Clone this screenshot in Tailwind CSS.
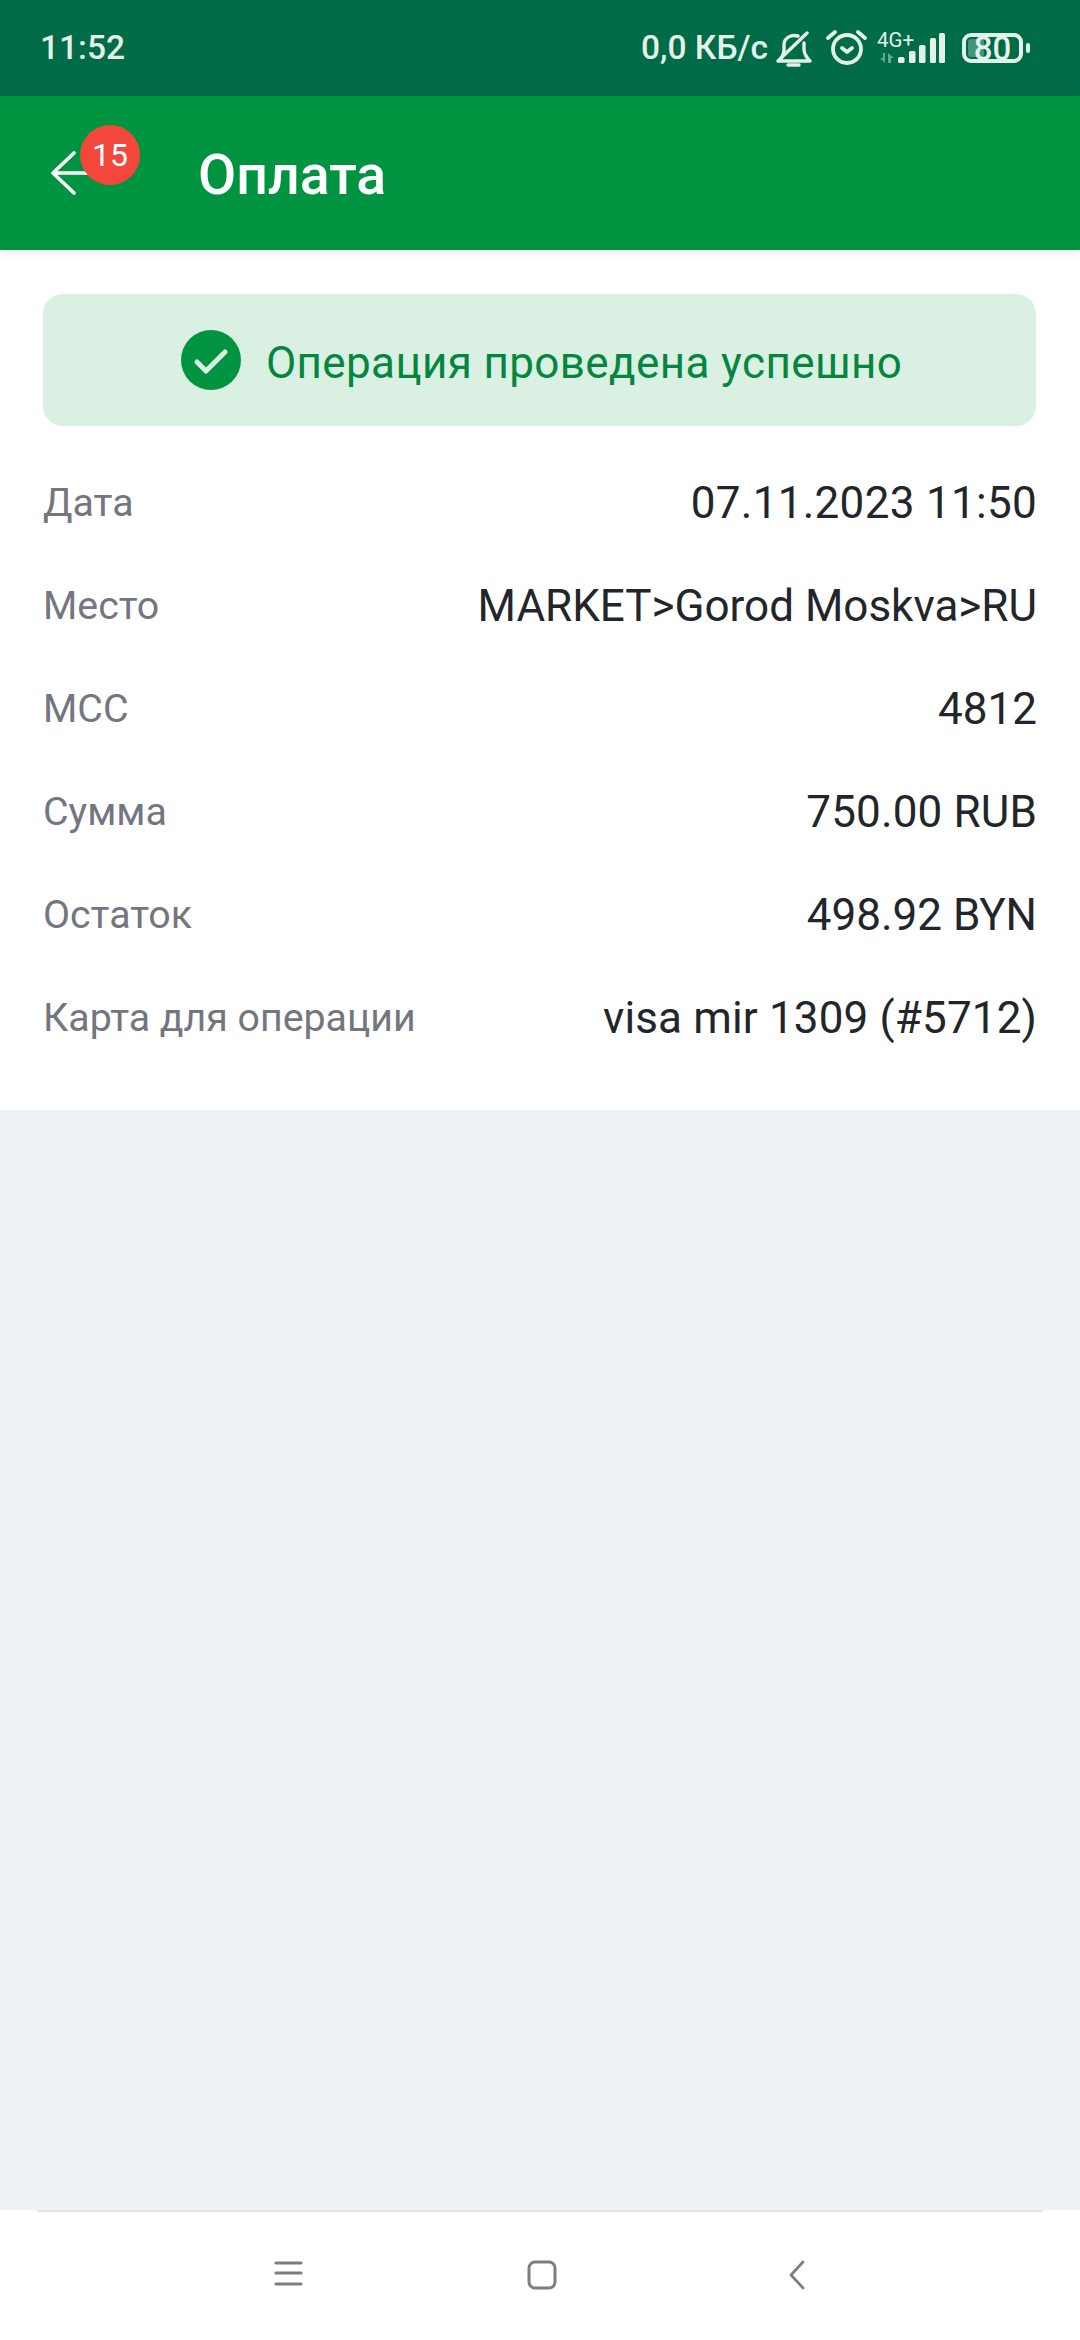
<!DOCTYPE html>
<html lang="ru">
<head>
  <meta charset="UTF-8" />
  <title>Оплата</title>
  <script src="https://cdn.jsdelivr.net/npm/@tailwindcss/browser@4"></script>
</head>
<body class="w-[1080px] h-[2340px] flex flex-col bg-[#eef2f5] font-['Roboto',sans-serif] overflow-hidden">

  <!-- status bar -->
  <div class="h-[96px] bg-[#006b47] flex items-center justify-between pl-[40px] pr-[50px] text-[#e3f1ea]">
    <span class="text-[33.5px] font-medium leading-none">11:52</span>
    <div class="flex items-center">
      <span class="text-[33.5px] font-medium leading-none">0,0 КБ/с</span>
      <svg class="ml-[8px] w-[37px] h-[38px]" viewBox="0 0 37 38" fill="none" stroke="currentColor" stroke-width="3.4" stroke-linecap="round" stroke-linejoin="round">
        <path d="M3 32h31c-4-4-6-8-6-12v-6"/>
        <path d="M22 7c-7-2-14 2-14 9v5c0 4-2 7-4 10"/>
        <path d="M2 32 31 4"/>
        <path d="M12 36h11"/>
      </svg>
      <svg class="ml-[13px] w-[41px] h-[38px]" viewBox="0 0 41 38" fill="none" stroke="currentColor" stroke-width="3.8" stroke-linecap="round" stroke-linejoin="round">
        <circle cx="21" cy="20" r="14"/>
        <path d="M16 19l5 4 5-4"/>
        <path d="M2 9l7-6M39 9l-7-6"/>
      </svg>
      <div class="ml-[10px] relative w-[68px] h-[36px]">
        <span class="absolute left-0 top-0 text-[20.5px] leading-none">4G+</span>
        <svg class="absolute left-0 top-0 w-[68px] h-[36px]" viewBox="0 0 68 36" fill="currentColor">
          <path d="M8 23v10L3 28h3v-5zM11 33V23l6 5h-3v5z" opacity="0.45"/>
          <rect x="21" y="27" width="6.5" height="6" rx="1.5"/>
          <rect x="32" y="21" width="6.5" height="12" rx="1.5"/>
          <rect x="42" y="15" width="6.5" height="18" rx="1.5"/>
          <rect x="53" y="8" width="6" height="25" rx="1.5"/>
          <rect x="62" y="3" width="6" height="30" rx="1.5"/>
        </svg>
      </div>
      <div class="ml-[17px] relative w-[68px] h-[30px] flex items-center">
        <div class="absolute inset-y-0 left-0 w-[61px] border-[4px] border-current rounded-[9px]"></div>
        <div class="absolute left-[6px] top-[6px] w-[16px] h-[18px] rounded-[3px] bg-current opacity-30"></div>
        <div class="absolute right-0 top-[10px] w-[4px] h-[10px] rounded-full bg-current"></div>
        <span class="relative w-[61px] text-center text-[33px] font-medium leading-none">80</span>
      </div>
    </div>
  </div>

  <!-- toolbar -->
  <div class="relative z-10 h-[154px] bg-[#009440] flex items-center shadow-[0_2px_8px_rgba(0,0,0,0.1)]">
    <svg class="absolute left-[50px] top-[55px] w-[40px] h-[44px]" viewBox="0 0 40 44" fill="none" stroke="white" stroke-width="3.6" stroke-linecap="round" stroke-linejoin="round">
      <path d="M24 2 3 22l21 20M3 22h36"/>
    </svg>
    <div class="absolute left-[80px] top-[29px] w-[60px] h-[60px] rounded-full bg-[#f4473b] flex items-center justify-center text-white text-[32px] leading-none">15</div>
    <h1 class="ml-[198px] pt-[6px] text-[55.5px] font-medium leading-none text-white">Оплата</h1>
  </div>

  <!-- details -->
  <div class="bg-white h-[860px] px-[43px] pt-[44px]">
    <div class="h-[132px] w-[993px] pl-[4px] rounded-[20px] bg-[#d9f0e3] flex items-center justify-center">
      <svg class="w-[60px] h-[60px]" viewBox="0 0 60 60" fill="none" stroke="#d9f0e3" stroke-width="5" stroke-linecap="round" stroke-linejoin="round">
        <circle cx="30" cy="30" r="30" fill="#009440" stroke="none"/>
        <path d="M16 32l9 9 19-19"/>
      </svg>
      <span class="ml-[25px] pt-[6px] text-[44px] leading-none tracking-[0.38px] text-[#05863f]">Операция проведена успешно</span>
    </div>

    <div class="mt-[26px] flex flex-col">
      <div class="h-[103px] flex items-center justify-between"><span class="text-[39.3px] text-[#73767f]">Дата</span><span class="mb-[2px] text-[44px] tracking-[0.3px] text-[#22262b]">07.11.2023 11:50</span></div>
      <div class="h-[103px] flex items-center justify-between"><span class="text-[39.3px] text-[#73767f]">Место</span><span class="mb-[2px] text-[44px] text-[#22262b]">MARKET&gt;Gorod Moskva&gt;RU</span></div>
      <div class="h-[103px] flex items-center justify-between"><span class="text-[39.3px] text-[#73767f]">MCC</span><span class="mb-[2px] text-[44px] text-[#22262b]">4812</span></div>
      <div class="h-[103px] flex items-center justify-between"><span class="text-[39.3px] text-[#73767f]">Сумма</span><span class="mb-[2px] text-[44px] tracking-[0.15px] text-[#22262b]">750.00 RUB</span></div>
      <div class="h-[103px] flex items-center justify-between"><span class="text-[39.3px] text-[#73767f]">Остаток</span><span class="mb-[2px] text-[44px] text-[#22262b]">498.92 BYN</span></div>
      <div class="h-[103px] flex items-center justify-between"><span class="text-[39.3px] text-[#73767f]">Карта для операции</span><span class="mb-[2px] text-[44px] tracking-[0.15px] text-[#22262b]">visa mir 1309 (#5712)</span></div>
    </div>
  </div>

  <div class="flex-1"></div>

  <!-- nav bar -->
  <div class="h-[130px] bg-white relative">
    <div class="absolute left-[37px] right-[37px] top-0 h-[2px] bg-[#e2e4e6]"></div>
    <div class="h-full flex items-start pt-[50px]">
      <svg class="ml-[274px] w-[29px] h-[30px]" viewBox="0 0 29 30" stroke="#7d7d7d" stroke-width="3.2" stroke-linecap="round"><path d="M2 3h25M2 13h25M2 24h25"/></svg>
      <svg class="ml-[224px] w-[30px] h-[30px]" viewBox="0 0 30 30" fill="none" stroke="#7d7d7d" stroke-width="3"><rect x="2" y="2" width="26" height="26" rx="6"/></svg>
      <svg class="ml-[231px] w-[18px] h-[30px]" viewBox="0 0 18 30" fill="none" stroke="#7d7d7d" stroke-width="2.6" stroke-linecap="round" stroke-linejoin="round"><path d="M15 2 3 15l12 13"/></svg>
    </div>
  </div>

</body>
</html>
